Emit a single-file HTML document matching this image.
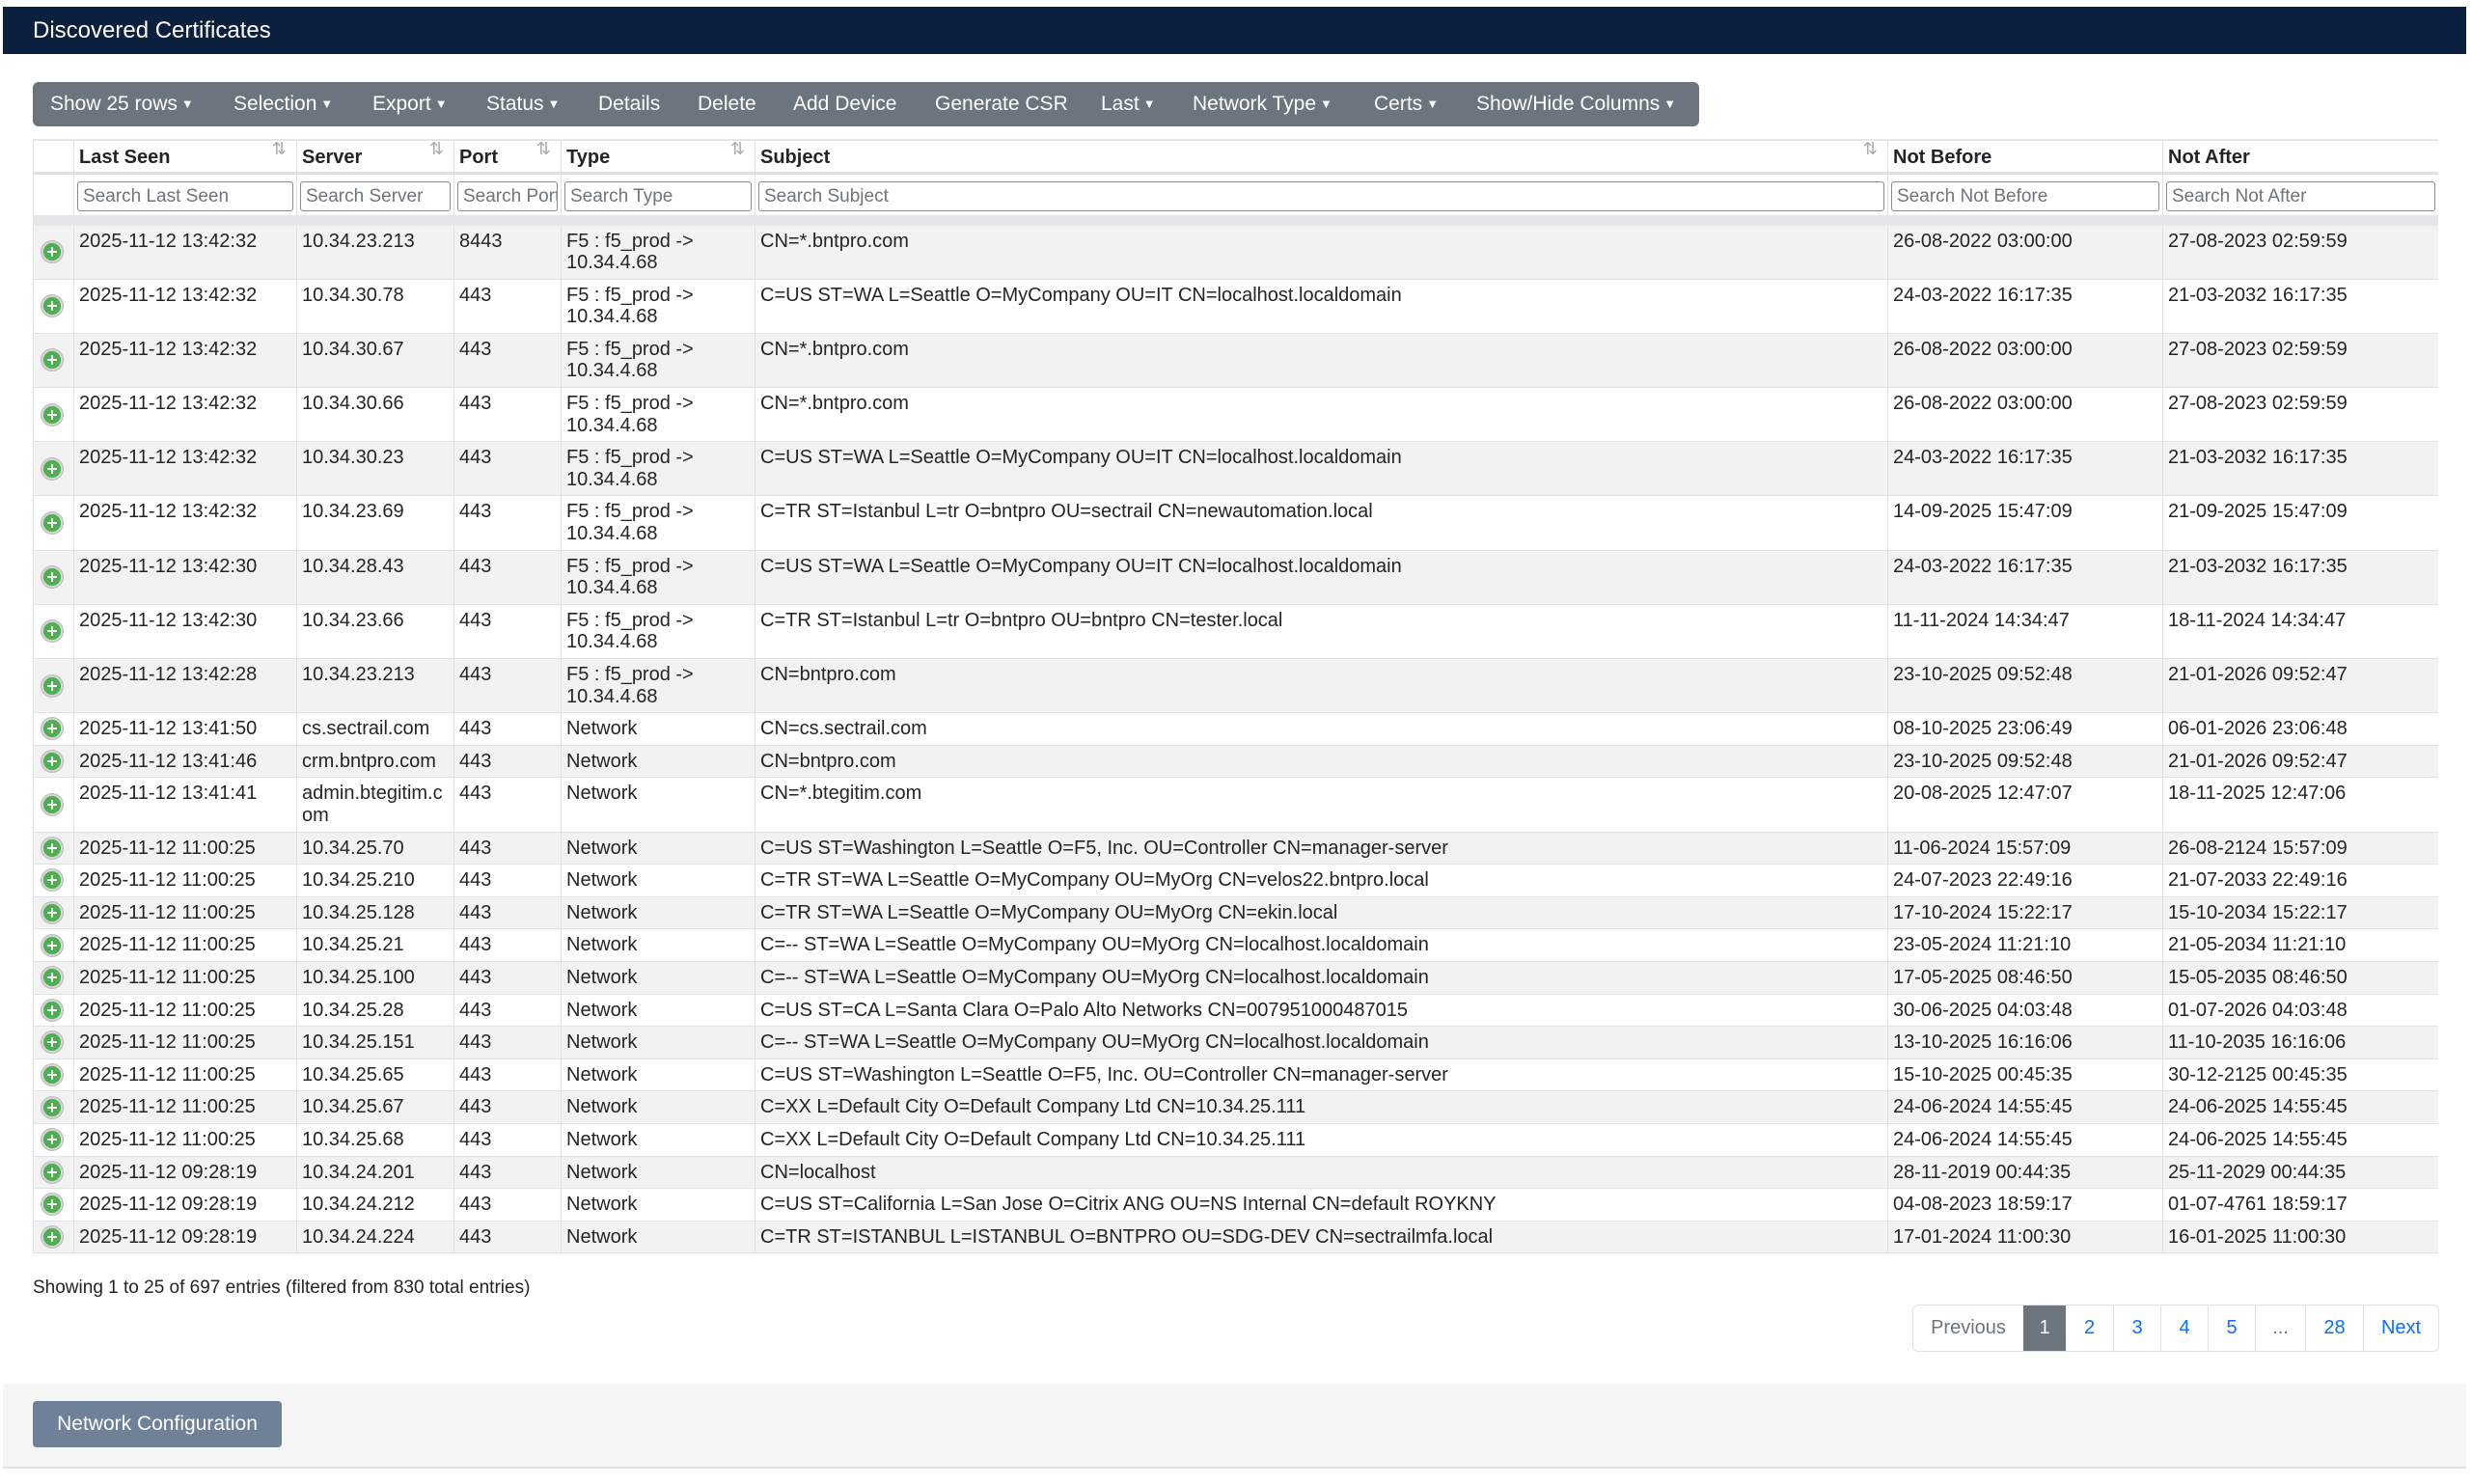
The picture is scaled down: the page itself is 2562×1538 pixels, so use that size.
<!DOCTYPE html>
<html><head><meta charset="utf-8">
<style>
*{box-sizing:border-box;margin:0;padding:0}
body{width:2562px;height:1538px;background:#fff;font-family:"Liberation Sans",sans-serif;color:#212529;position:relative;overflow:hidden}
.hdr{position:absolute;left:3px;top:7px;width:2553px;height:49px;background:#0b1f3e;color:#fff;font-size:24px;line-height:49px;padding-left:31px}
.tb{position:absolute;left:34px;top:85px;width:1727px;height:46px;background:#6c757d;border-radius:6px;color:#fff;font-size:21px}
.tb span{position:absolute;top:0;line-height:46px;white-space:nowrap}
.car{font-size:13px;vertical-align:3px;margin-left:4px}
table{position:absolute;left:34px;top:144px;width:2492px;border-collapse:collapse;table-layout:fixed;font-size:20px}
th{height:34px;text-align:left;font-weight:bold;padding:4px 5px 0;border-left:1px solid #e2e2e2;position:relative;border-bottom:3px solid #dfe1e4;border-top:2px solid #e6e6e6}
th .s{position:absolute;right:10px;top:-2px;color:#aaa;font-size:18px;font-weight:normal}
tr.sr td{height:49px;padding:6px 3px 3px;border-bottom:11px solid #e4e6e9;border-left:1px solid #e2e2e2}
.in{border:1px solid #8a8a8a;border-radius:3px;height:31px;line-height:29px;padding-left:5px;color:#6c757d;font-size:19px;overflow:hidden;white-space:nowrap}
tbody td{padding:5px 5px;line-height:22.6px;border-left:1px solid #e2e2e2;border-bottom:1px solid #e2e2e2;vertical-align:top;overflow:hidden}
tbody tr:nth-child(odd) td{background:#f2f2f2}
tbody td:first-child{vertical-align:middle;padding:0 0 0 8px}
.ic{width:22px;height:22px;border-radius:50%;background:#4caf50;border:2px solid #d4d4d4;position:relative;box-shadow:0 0 0 1px #bbb}
.ic:before{content:"";position:absolute;left:8px;top:4px;width:2px;height:10px;background:#fff}
.ic:after{content:"";position:absolute;left:4px;top:8px;width:10px;height:2px;background:#fff}
.info{position:absolute;left:34px;top:1324px;font-size:19px}
.pg{position:absolute;left:1982px;top:1352px;height:49px;display:flex;border:1px solid #dee2e6;border-radius:6px;font-size:20px;overflow:hidden}
.pg div{line-height:47px;text-align:center;color:#0d6efd;border-left:1px solid #dee2e6}
.ft{position:absolute;left:3px;top:1434px;width:2553px;height:88px;background:#f5f5f5;border-bottom:2px solid #e3e3e3}
.btn{position:absolute;left:31px;top:18px;width:258px;height:48px;background:#6e8199;border-radius:4px;color:#fff;font-size:21px;line-height:48px;text-align:center}
</style></head><body>
<div class="hdr">Discovered Certificates</div>
<div class="tb">
<span style="left:18px">Show 25 rows<span class="car">▼</span></span>
<span style="left:208px">Selection<span class="car">▼</span></span>
<span style="left:352px">Export<span class="car">▼</span></span>
<span style="left:470px">Status<span class="car">▼</span></span>
<span style="left:586px">Details</span>
<span style="left:689px">Delete</span>
<span style="left:788px">Add Device</span>
<span style="left:935px">Generate CSR</span>
<span style="left:1107px">Last<span class="car">▼</span></span>
<span style="left:1202px">Network Type<span class="car">▼</span></span>
<span style="left:1390px">Certs<span class="car">▼</span></span>
<span style="left:1496px">Show/Hide Columns<span class="car">▼</span></span>
</div>
<table>
<colgroup><col style="width:42px"><col style="width:231px"><col style="width:163px"><col style="width:111px"><col style="width:201px"><col style="width:1174px"><col style="width:285px"><col style="width:285px"></colgroup>
<thead>
<tr><th></th><th>Last Seen<span class="s">⇅</span></th><th>Server<span class="s">⇅</span></th><th>Port<span class="s">⇅</span></th><th>Type<span class="s">⇅</span></th><th>Subject<span class="s">⇅</span></th><th>Not Before</th><th>Not After</th></tr>
<tr class="sr"><td></td><td><div class="in">Search Last Seen</div></td><td><div class="in">Search Server</div></td><td><div class="in">Search Port</div></td><td><div class="in">Search Type</div></td><td><div class="in">Search Subject</div></td><td><div class="in">Search Not Before</div></td><td><div class="in">Search Not After</div></td></tr>
</thead>
<tbody>
<tr><td><div class="ic"></div></td><td>2025-11-12 13:42:32</td><td>10.34.23.213</td><td>8443</td><td>F5 : f5_prod -&gt; 10.34.4.68</td><td>CN=*.bntpro.com</td><td>26-08-2022 03:00:00</td><td>27-08-2023 02:59:59</td></tr>
<tr><td><div class="ic"></div></td><td>2025-11-12 13:42:32</td><td>10.34.30.78</td><td>443</td><td>F5 : f5_prod -&gt; 10.34.4.68</td><td>C=US ST=WA L=Seattle O=MyCompany OU=IT CN=localhost.localdomain</td><td>24-03-2022 16:17:35</td><td>21-03-2032 16:17:35</td></tr>
<tr><td><div class="ic"></div></td><td>2025-11-12 13:42:32</td><td>10.34.30.67</td><td>443</td><td>F5 : f5_prod -&gt; 10.34.4.68</td><td>CN=*.bntpro.com</td><td>26-08-2022 03:00:00</td><td>27-08-2023 02:59:59</td></tr>
<tr><td><div class="ic"></div></td><td>2025-11-12 13:42:32</td><td>10.34.30.66</td><td>443</td><td>F5 : f5_prod -&gt; 10.34.4.68</td><td>CN=*.bntpro.com</td><td>26-08-2022 03:00:00</td><td>27-08-2023 02:59:59</td></tr>
<tr><td><div class="ic"></div></td><td>2025-11-12 13:42:32</td><td>10.34.30.23</td><td>443</td><td>F5 : f5_prod -&gt; 10.34.4.68</td><td>C=US ST=WA L=Seattle O=MyCompany OU=IT CN=localhost.localdomain</td><td>24-03-2022 16:17:35</td><td>21-03-2032 16:17:35</td></tr>
<tr><td><div class="ic"></div></td><td>2025-11-12 13:42:32</td><td>10.34.23.69</td><td>443</td><td>F5 : f5_prod -&gt; 10.34.4.68</td><td>C=TR ST=Istanbul L=tr O=bntpro OU=sectrail CN=newautomation.local</td><td>14-09-2025 15:47:09</td><td>21-09-2025 15:47:09</td></tr>
<tr><td><div class="ic"></div></td><td>2025-11-12 13:42:30</td><td>10.34.28.43</td><td>443</td><td>F5 : f5_prod -&gt; 10.34.4.68</td><td>C=US ST=WA L=Seattle O=MyCompany OU=IT CN=localhost.localdomain</td><td>24-03-2022 16:17:35</td><td>21-03-2032 16:17:35</td></tr>
<tr><td><div class="ic"></div></td><td>2025-11-12 13:42:30</td><td>10.34.23.66</td><td>443</td><td>F5 : f5_prod -&gt; 10.34.4.68</td><td>C=TR ST=Istanbul L=tr O=bntpro OU=bntpro CN=tester.local</td><td>11-11-2024 14:34:47</td><td>18-11-2024 14:34:47</td></tr>
<tr><td><div class="ic"></div></td><td>2025-11-12 13:42:28</td><td>10.34.23.213</td><td>443</td><td>F5 : f5_prod -&gt; 10.34.4.68</td><td>CN=bntpro.com</td><td>23-10-2025 09:52:48</td><td>21-01-2026 09:52:47</td></tr>
<tr><td><div class="ic"></div></td><td>2025-11-12 13:41:50</td><td>cs.sectrail.com</td><td>443</td><td>Network</td><td>CN=cs.sectrail.com</td><td>08-10-2025 23:06:49</td><td>06-01-2026 23:06:48</td></tr>
<tr><td><div class="ic"></div></td><td>2025-11-12 13:41:46</td><td>crm.bntpro.com</td><td>443</td><td>Network</td><td>CN=bntpro.com</td><td>23-10-2025 09:52:48</td><td>21-01-2026 09:52:47</td></tr>
<tr><td><div class="ic"></div></td><td>2025-11-12 13:41:41</td><td>admin.btegitim.c<br>om</td><td>443</td><td>Network</td><td>CN=*.btegitim.com</td><td>20-08-2025 12:47:07</td><td>18-11-2025 12:47:06</td></tr>
<tr><td><div class="ic"></div></td><td>2025-11-12 11:00:25</td><td>10.34.25.70</td><td>443</td><td>Network</td><td>C=US ST=Washington L=Seattle O=F5, Inc. OU=Controller CN=manager-server</td><td>11-06-2024 15:57:09</td><td>26-08-2124 15:57:09</td></tr>
<tr><td><div class="ic"></div></td><td>2025-11-12 11:00:25</td><td>10.34.25.210</td><td>443</td><td>Network</td><td>C=TR ST=WA L=Seattle O=MyCompany OU=MyOrg CN=velos22.bntpro.local</td><td>24-07-2023 22:49:16</td><td>21-07-2033 22:49:16</td></tr>
<tr><td><div class="ic"></div></td><td>2025-11-12 11:00:25</td><td>10.34.25.128</td><td>443</td><td>Network</td><td>C=TR ST=WA L=Seattle O=MyCompany OU=MyOrg CN=ekin.local</td><td>17-10-2024 15:22:17</td><td>15-10-2034 15:22:17</td></tr>
<tr><td><div class="ic"></div></td><td>2025-11-12 11:00:25</td><td>10.34.25.21</td><td>443</td><td>Network</td><td>C=-- ST=WA L=Seattle O=MyCompany OU=MyOrg CN=localhost.localdomain</td><td>23-05-2024 11:21:10</td><td>21-05-2034 11:21:10</td></tr>
<tr><td><div class="ic"></div></td><td>2025-11-12 11:00:25</td><td>10.34.25.100</td><td>443</td><td>Network</td><td>C=-- ST=WA L=Seattle O=MyCompany OU=MyOrg CN=localhost.localdomain</td><td>17-05-2025 08:46:50</td><td>15-05-2035 08:46:50</td></tr>
<tr><td><div class="ic"></div></td><td>2025-11-12 11:00:25</td><td>10.34.25.28</td><td>443</td><td>Network</td><td>C=US ST=CA L=Santa Clara O=Palo Alto Networks CN=007951000487015</td><td>30-06-2025 04:03:48</td><td>01-07-2026 04:03:48</td></tr>
<tr><td><div class="ic"></div></td><td>2025-11-12 11:00:25</td><td>10.34.25.151</td><td>443</td><td>Network</td><td>C=-- ST=WA L=Seattle O=MyCompany OU=MyOrg CN=localhost.localdomain</td><td>13-10-2025 16:16:06</td><td>11-10-2035 16:16:06</td></tr>
<tr><td><div class="ic"></div></td><td>2025-11-12 11:00:25</td><td>10.34.25.65</td><td>443</td><td>Network</td><td>C=US ST=Washington L=Seattle O=F5, Inc. OU=Controller CN=manager-server</td><td>15-10-2025 00:45:35</td><td>30-12-2125 00:45:35</td></tr>
<tr><td><div class="ic"></div></td><td>2025-11-12 11:00:25</td><td>10.34.25.67</td><td>443</td><td>Network</td><td>C=XX L=Default City O=Default Company Ltd CN=10.34.25.111</td><td>24-06-2024 14:55:45</td><td>24-06-2025 14:55:45</td></tr>
<tr><td><div class="ic"></div></td><td>2025-11-12 11:00:25</td><td>10.34.25.68</td><td>443</td><td>Network</td><td>C=XX L=Default City O=Default Company Ltd CN=10.34.25.111</td><td>24-06-2024 14:55:45</td><td>24-06-2025 14:55:45</td></tr>
<tr><td><div class="ic"></div></td><td>2025-11-12 09:28:19</td><td>10.34.24.201</td><td>443</td><td>Network</td><td>CN=localhost</td><td>28-11-2019 00:44:35</td><td>25-11-2029 00:44:35</td></tr>
<tr><td><div class="ic"></div></td><td>2025-11-12 09:28:19</td><td>10.34.24.212</td><td>443</td><td>Network</td><td>C=US ST=California L=San Jose O=Citrix ANG OU=NS Internal CN=default ROYKNY</td><td>04-08-2023 18:59:17</td><td>01-07-4761 18:59:17</td></tr>
<tr><td><div class="ic"></div></td><td>2025-11-12 09:28:19</td><td>10.34.24.224</td><td>443</td><td>Network</td><td>C=TR ST=ISTANBUL L=ISTANBUL O=BNTPRO OU=SDG-DEV CN=sectrailmfa.local</td><td>17-01-2024 11:00:30</td><td>16-01-2025 11:00:30</td></tr>
</tbody>
</table>
<div class="info">Showing 1 to 25 of 697 entries (filtered from 830 total entries)</div>
<div class="pg">
<div style="width:114px;color:#6c757d;border-left:none">Previous</div>
<div style="width:44px;background:#6c757d;color:#fff;border-left:none">1</div>
<div style="width:49px;border-left:none">2</div>
<div style="width:49px">3</div>
<div style="width:49px">4</div>
<div style="width:49px">5</div>
<div style="width:52px;color:#6c757d">...</div>
<div style="width:60px">28</div>
<div style="width:78px">Next</div>
</div>
<div class="ft"><div class="btn">Network Configuration</div></div>
</body></html>
